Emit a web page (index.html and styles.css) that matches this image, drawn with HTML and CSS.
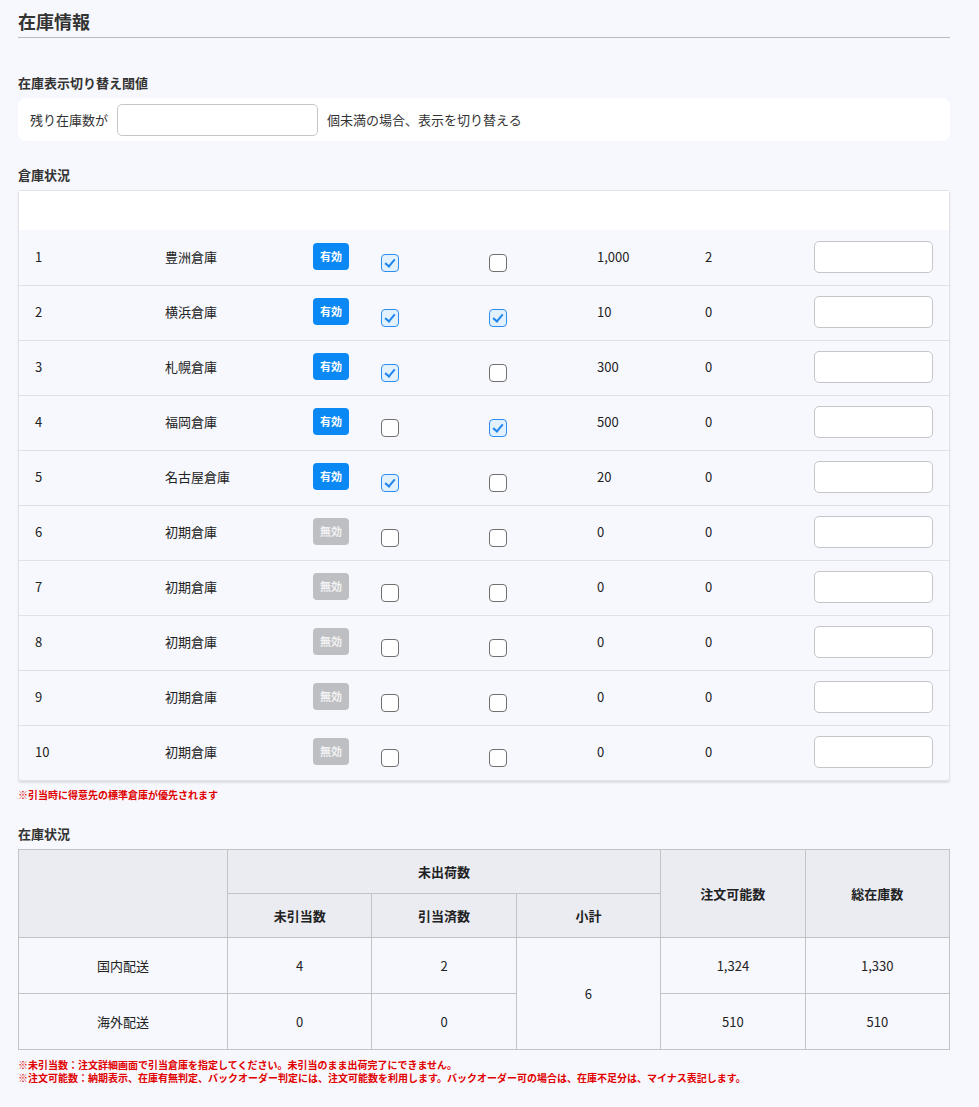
FILE: index.html
```html
<!DOCTYPE html>
<html lang="ja">
<head>
    <meta charset="UTF-8">
    <title>在庫情報</title>
    <link rel="stylesheet" href="styles.css">
</head>
<body>
<div class="page">
    <h1 class="title">在庫情報</h1>

    <div class="label first">在庫表示切り替え閾値</div>
    <div class="threshold">
        <span>残り在庫数が</span>
        <input class="field wide" type="text">
        <span>個未満の場合、表示を切り替える</span>
    </div>

    <div class="label">倉庫状況</div>
    <div class="card">
        <div class="card-head"></div>
        <div class="wh-row">
            <span>1</span><span>豊洲倉庫</span><span><b class="badge on">有効</b></span>
            <span><i class="cb checked"></i></span><span><i class="cb"></i></span>
            <span>1,000</span><span>2</span><span><input class="field" type="text"></span>
        </div>
        <div class="wh-row">
            <span>2</span><span>横浜倉庫</span><span><b class="badge on">有効</b></span>
            <span><i class="cb checked"></i></span><span><i class="cb checked"></i></span>
            <span>10</span><span>0</span><span><input class="field" type="text"></span>
        </div>
        <div class="wh-row">
            <span>3</span><span>札幌倉庫</span><span><b class="badge on">有効</b></span>
            <span><i class="cb checked"></i></span><span><i class="cb"></i></span>
            <span>300</span><span>0</span><span><input class="field" type="text"></span>
        </div>
        <div class="wh-row">
            <span>4</span><span>福岡倉庫</span><span><b class="badge on">有効</b></span>
            <span><i class="cb"></i></span><span><i class="cb checked"></i></span>
            <span>500</span><span>0</span><span><input class="field" type="text"></span>
        </div>
        <div class="wh-row">
            <span>5</span><span>名古屋倉庫</span><span><b class="badge on">有効</b></span>
            <span><i class="cb checked"></i></span><span><i class="cb"></i></span>
            <span>20</span><span>0</span><span><input class="field" type="text"></span>
        </div>
        <div class="wh-row">
            <span>6</span><span>初期倉庫</span><span><b class="badge off">無効</b></span>
            <span><i class="cb"></i></span><span><i class="cb"></i></span>
            <span>0</span><span>0</span><span><input class="field" type="text"></span>
        </div>
        <div class="wh-row">
            <span>7</span><span>初期倉庫</span><span><b class="badge off">無効</b></span>
            <span><i class="cb"></i></span><span><i class="cb"></i></span>
            <span>0</span><span>0</span><span><input class="field" type="text"></span>
        </div>
        <div class="wh-row">
            <span>8</span><span>初期倉庫</span><span><b class="badge off">無効</b></span>
            <span><i class="cb"></i></span><span><i class="cb"></i></span>
            <span>0</span><span>0</span><span><input class="field" type="text"></span>
        </div>
        <div class="wh-row">
            <span>9</span><span>初期倉庫</span><span><b class="badge off">無効</b></span>
            <span><i class="cb"></i></span><span><i class="cb"></i></span>
            <span>0</span><span>0</span><span><input class="field" type="text"></span>
        </div>
        <div class="wh-row">
            <span>10</span><span>初期倉庫</span><span><b class="badge off">無効</b></span>
            <span><i class="cb"></i></span><span><i class="cb"></i></span>
            <span>0</span><span>0</span><span><input class="field" type="text"></span>
        </div>
    </div>
    <p class="note">※引当時に得意先の標準倉庫が優先されます</p>

    <div class="label second">在庫状況</div>
    <table class="stock">
        <tr>
            <th rowspan="2"></th>
            <th colspan="3" class="h1">未出荷数</th>
            <th rowspan="2">注文可能数</th>
            <th rowspan="2">総在庫数</th>
        </tr>
        <tr>
            <th class="h2">未引当数</th>
            <th class="h2">引当済数</th>
            <th class="h2">小計</th>
        </tr>
        <tr>
            <td>国内配送</td>
            <td>4</td>
            <td>2</td>
            <td rowspan="2">6</td>
            <td>1,324</td>
            <td>1,330</td>
        </tr>
        <tr>
            <td>海外配送</td>
            <td>0</td>
            <td>0</td>
            <td>510</td>
            <td>510</td>
        </tr>
    </table>
    <p class="note small">※未引当数：注文詳細画面で引当倉庫を指定してください。未引当のまま出荷完了にできません。<br>※注文可能数：納期表示、在庫有無判定、バックオーダー判定には、注文可能数を利用します。バックオーダー可の場合は、在庫不足分は、マイナス表記します。</p>
</div>
</body>
</html>
```

FILE: styles.css
```css
body {
    margin: 0;
    background-color: #f7f8fd;
    font-family: "Noto Sans CJK JP", "Noto Sans", sans-serif;
    color: #222;
    font-size: 13px;
}
.page {
    width: 932px;
    padding-left: 18px;
    padding-bottom: 20px;
}
.title {
    margin: 8px 0 0;
    font-size: 18px;
    line-height: 26px;
    color: #333;
    padding-bottom: 3px;
    border-bottom: 1px solid #b9bbc0;
}
.label {
    font-size: 13px;
    font-weight: bold;
    line-height: 20px;
    color: #333;
    margin-top: 24px;
    margin-bottom: 5px;
}
.label.first {
    margin-top: 35px;
}
.label.second {
    margin-top: 22px;
}
.threshold {
    background: #fff;
    border-radius: 8px;
    height: 43px;
    display: flex;
    align-items: center;
    padding: 0 12px;
    gap: 9px;
    color: #333;
}
.field {
    box-sizing: border-box;
    width: 119px;
    height: 32px;
    border: 1px solid #c4c6ca;
    border-radius: 5px;
    background: #fff;
    font: inherit;
    padding: 0 8px;
}
.field.wide {
    width: 201px;
    height: 32px;
}
.card {
    border: 1px solid #e1e3e8;
    border-radius: 3px;
    background: #f7f8fd;
    box-shadow: 0 2px 2px rgba(0, 0, 0, 0.1);
}
.card-head {
    height: 39px;
    background: #fff;
}
.wh-row {
    display: grid;
    grid-template-columns: 130px 148px 68px 108px 108px 108px 109px 1fr;
    align-items: center;
    height: 54px;
    padding-left: 16px;
    border-top: 1px solid #dfe1e6;
}
.card-head + .wh-row {
    border-top-color: transparent;
}
.wh-row > span {
    display: flex;
    align-items: center;
    line-height: 20px;
    margin-top: -3px;
}
.badge {
    display: inline-block;
    width: 36px;
    height: 27px;
    line-height: 27px;
    text-align: center;
    border-radius: 4px;
    font-size: 11px;
    color: #fff;
}
.badge.on {
    background: #0a89f4;
}
.badge.off {
    background: #bdbfc2;
    color: #f2f2f2;
}
.cb {
    box-sizing: border-box;
    width: 18px;
    height: 18px;
    border: 1px solid #707070;
    border-radius: 4px;
    background: #fff;
    margin-top: 12px;
    position: relative;
}
.cb.checked {
    border-color: #2b8ff0;
    background: #e3f0fd;
}
.cb.checked::after {
    content: "";
    position: absolute;
    left: 5px;
    top: 2px;
    width: 4px;
    height: 8px;
    border: solid #1f86ee;
    border-width: 0 2px 2px 0;
    transform: rotate(40deg);
}
.note {
    margin: 7px 0 0;
    color: #e00000;
    font-size: 10px;
    font-weight: bold;
    line-height: 14px;
}
.note.small {
    margin-top: 8px;
    line-height: 13px;
}
.stock {
    width: 932px;
    border-collapse: collapse;
    table-layout: fixed;
}
.stock th,
.stock td {
    border: 1px solid #c2c3c7;
    text-align: center;
    padding: 0;
    font-size: 13px;
}
.stock th {
    background: #eaecf2;
    font-weight: bold;
    color: #222;
}
.stock th:first-child {
    width: 208px;
}
.stock .h1,
.stock .h2 {
    height: 43px;
}
.stock td {
    height: 55px;
    background: #f7f8fd;
}
```
